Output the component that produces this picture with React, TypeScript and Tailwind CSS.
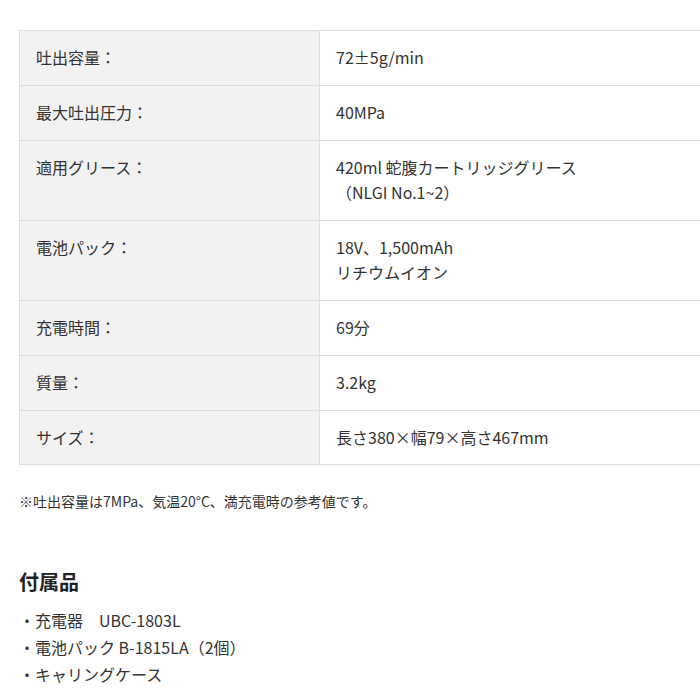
import React from "react";

interface SpecRow {
  label: string;
  value: string[];
}

const specs: SpecRow[] = [
  { label: "吐出容量：", value: ["72±5g/min"] },
  { label: "最大吐出圧力：", value: ["40MPa"] },
  { label: "適用グリース：", value: ["420ml 蛇腹カートリッジグリース", "（NLGI No.1~2）"] },
  { label: "電池パック：", value: ["18V、1,500mAh", "リチウムイオン"] },
  { label: "充電時間：", value: ["69分"] },
  { label: "質量：", value: ["3.2kg"] },
  { label: "サイズ：", value: ["長さ380×幅79×高さ467mm"] },
];

const accessories = ["充電器　UBC-1803L", "電池パック B-1815LA（2個）", "キャリングケース"];

const App: React.FC = () => {
  return (
    <div
      className="w-[700px] h-[700px] overflow-hidden bg-white pl-[19px] pt-[30px] text-[#333]"
      style={{ fontFamily: '"Noto Sans CJK JP", "Noto Sans", sans-serif' }}
    >
      {/* spec table, runs off the right edge */}
      <div className="w-[720px] border border-[#ddd]">
        {specs.map((row, i) => {
          const last = i === specs.length - 1;
          const pad = last ? "pt-[14px] pb-[14px]" : "pt-[14px] pb-[15px]";
          return (
            <div
              key={row.label}
              className={`grid grid-cols-[300px_1fr] text-[16px] leading-[25px] ${
                last ? "" : "border-b border-[#ddd]"
              }`}
            >
              <div className={`bg-[#f2f2f2] border-r border-[#ddd] px-4 ${pad}`}>{row.label}</div>
              <div className={`px-4 ${pad}`}>
                {row.value.map((line) => (
                  <div key={line}>{line}</div>
                ))}
              </div>
            </div>
          );
        })}
      </div>

      <p className="mt-[26px] text-[14px] leading-[20px]">※吐出容量は7MPa、気温20°C、満充電時の参考値です。</p>

      <h3 className="mt-[56px] text-[20px] leading-[30px] font-bold text-[#222]">付属品</h3>

      <ul className="mt-[10px] text-[16px] leading-[27px]">
        {accessories.map((item) => (
          <li key={item}>・{item}</li>
        ))}
      </ul>
    </div>
  );
};

export default App;
